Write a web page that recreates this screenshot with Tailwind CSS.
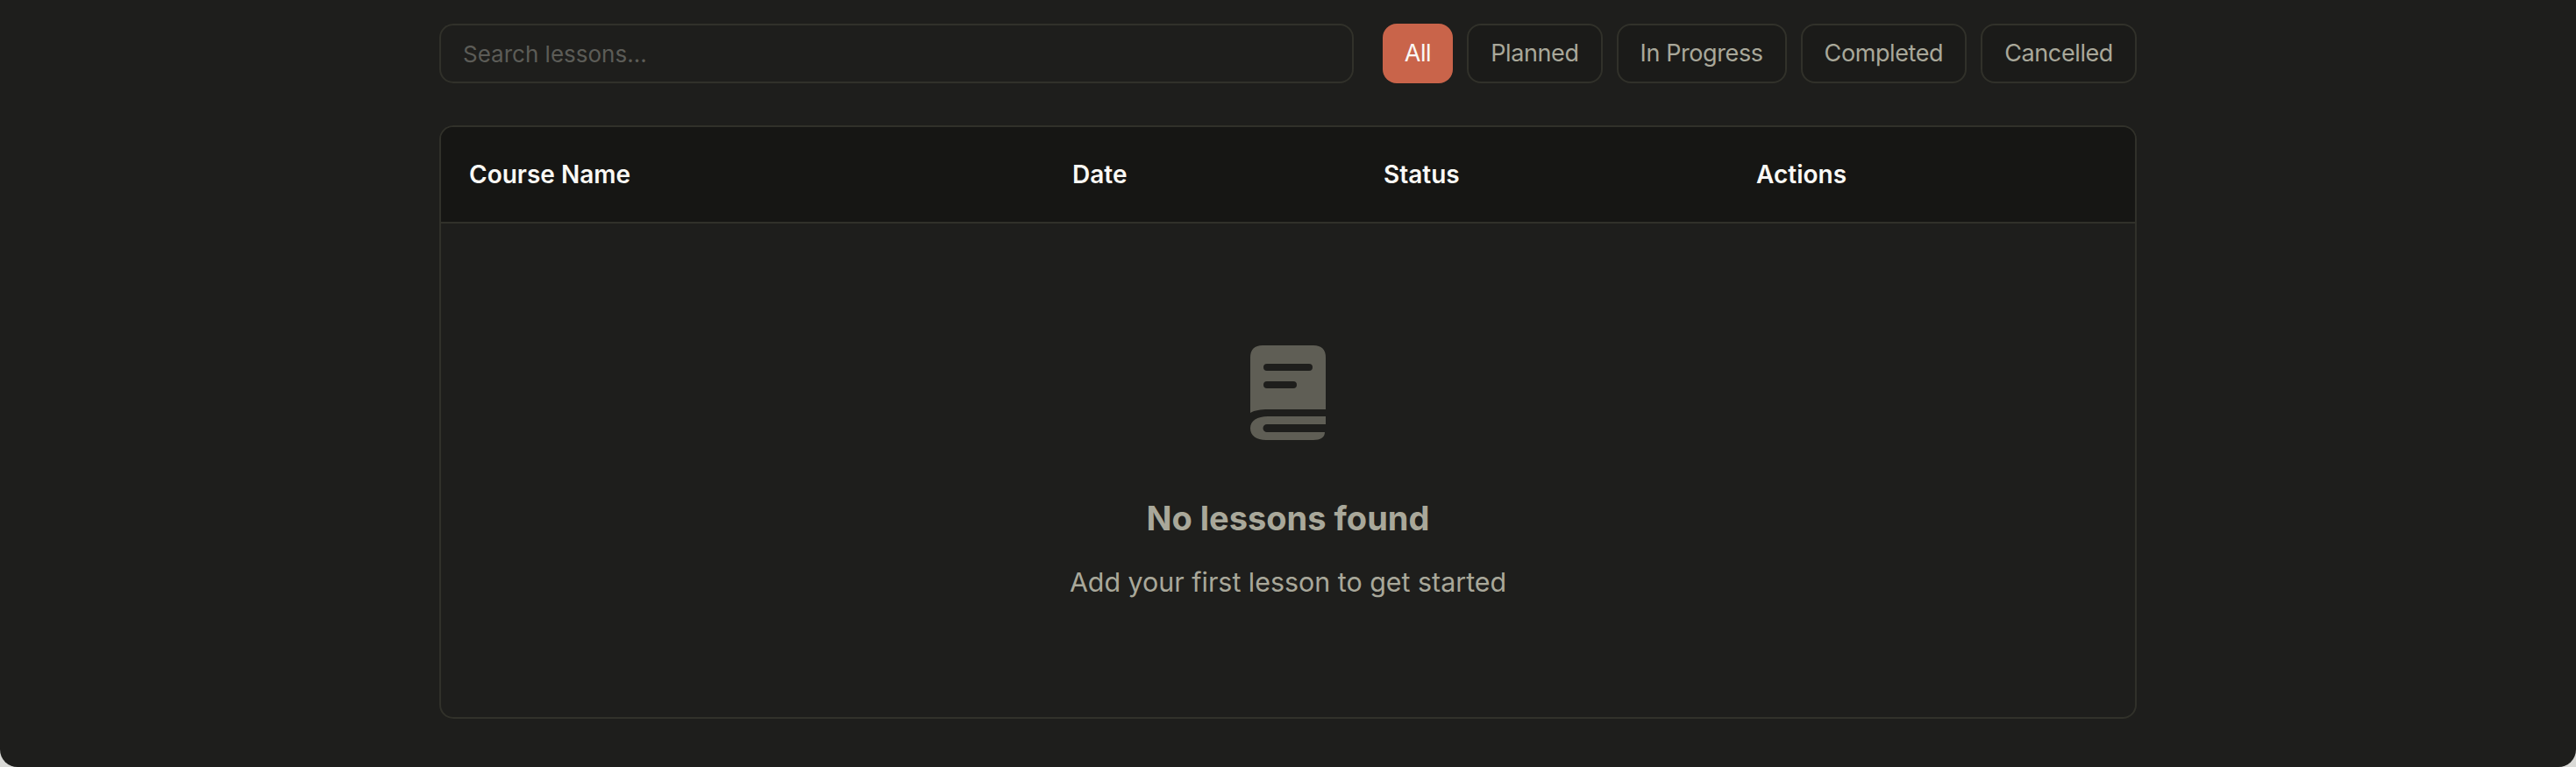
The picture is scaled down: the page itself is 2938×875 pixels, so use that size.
<!DOCTYPE html>
<html lang="en">
<head>
    <meta charset="UTF-8">
    <title>Lessons</title>
    <script src="https://cdn.jsdelivr.net/npm/@tailwindcss/browser@4"></script>
</head>
<body class="bg-[#d9d9d6] font-[Inter,sans-serif] overflow-hidden">
    <div class="h-[875px] bg-[#1e1e1c] rounded-b-[20px] pt-[27px]">
        <div class="w-[1936px] mx-auto">

            <!-- Search and filters -->
            <div class="flex gap-[33px] mb-[48px]">
                <input type="text" placeholder="Search lessons..." class="flex-1 h-[68px] px-[25px] bg-[#1e1e1c] border-2 border-[#31312a] rounded-[16px] text-[26px] placeholder:text-[#5c5c57] outline-none">
                <div class="flex gap-[16px] text-[27px] tracking-[-0.4px] text-[#a9a89a]">
                    <button class="h-[68px] px-[25px] bg-[#c9644a] text-[#faf9f5] rounded-[16px]">All</button>
                    <button class="h-[68px] px-[25px] bg-[#1b1b19] border-2 border-[#31312a] rounded-[16px]">Planned</button>
                    <button class="h-[68px] px-[25px] bg-[#1b1b19] border-2 border-[#31312a] rounded-[16px]">In Progress</button>
                    <button class="h-[68px] px-[25px] bg-[#1b1b19] border-2 border-[#31312a] rounded-[16px]">Completed</button>
                    <button class="h-[68px] px-[25px] bg-[#1b1b19] border-2 border-[#31312a] rounded-[16px]">Cancelled</button>
                </div>
            </div>

            <!-- Table -->
            <div class="h-[677px] border-2 border-[#31312a] rounded-[16px] overflow-hidden">
                <div class="grid grid-cols-[688px_355px_425px_1fr] items-center h-[110px] px-[32px] bg-[#161614] border-b-2 border-[#31312a] text-[28px] font-semibold text-[#faf9f5]">
                    <div>Course Name</div>
                    <div>Date</div>
                    <div>Status</div>
                    <div>Actions</div>
                </div>

                <!-- Empty state -->
                <div class="flex flex-col items-center pt-[139px]">
                    <svg class="w-[86px] h-[108px]" viewBox="0 0 86 108" fill="#5f5e55" fill-rule="evenodd">
                        <path d="M14 0H72Q86 0 86 14V73H20C12 73 5 74 0 77V14Q0 0 14 0ZM19 21H67a4 4 0 0 1 0 8H19a4 4 0 0 1 0-8ZM19 41H49a4 4 0 0 1 0 8H19a4 4 0 0 1 0-8Z"/>
                        <path d="M20 81H86V90H19a4.5 4.5 0 0 0 0 9H85C85 105 80 108 72 108H18C7 108 0 103 0 94.5C0 86 8 81 20 81Z"/>
                    </svg>
                    <h3 class="mt-[61px] text-[38px] leading-[56px] font-bold text-[#a9a89a]">No lessons found</h3>
                    <p class="mt-[21px] text-[30.4px] leading-[48px] text-[#a9a89a]">Add your first lesson to get started</p>
                </div>
            </div>
        </div>
    </div>
</body>
</html>
